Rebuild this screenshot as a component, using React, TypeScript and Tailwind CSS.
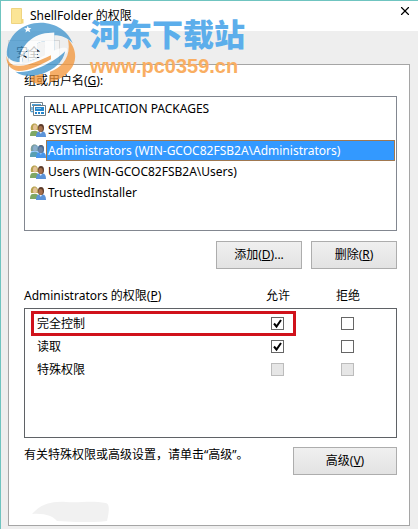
import type { ReactNode } from "react";
import { X } from "lucide-react";

type Principal = {
  name: string;
  kind: "package" | "group";
};

const principals: Principal[] = [
  { name: "ALL APPLICATION PACKAGES", kind: "package" },
  { name: "SYSTEM", kind: "group" },
  { name: "Administrators (WIN-GCOC82FSB2A\\Administrators)", kind: "group" },
  { name: "Users (WIN-GCOC82FSB2A\\Users)", kind: "group" },
  { name: "TrustedInstaller", kind: "group" },
];

const selectedIndex = 2;

const permissions = [
  { id: "full", name: "完全控制", allow: true, disabled: false },
  { id: "read", name: "读取", allow: true, disabled: false },
  { id: "special", name: "特殊权限", allow: false, disabled: true },
];

function PackageIcon() {
  return (
    <svg viewBox="0 0 16 14" className="h-[14px] w-4 shrink-0">
      <path d="M.5 9.500V.5h12V3" fill="#fff" stroke="#73828c" />
      <path d="M2 2h9v2H2z" fill="#4ba3dc" />
      <path d="M1 9.500h3M2 5v3" stroke="#4ba3dc" strokeWidth="1.500" />
      <path d="M3.500 3.500h12v10h-12z" fill="#fff" stroke="#6b7b86" />
      <path d="M5 5h9v4H5z" fill="#2586cd" />
      <path d="M5 11h2M8 11h2M11 11h3" stroke="#2586cd" strokeWidth="2" />
      <path d="M6 6h5v1H6z" fill="#83c4ec" />
    </svg>
  );
}

function GroupIcon({ selected }: { selected: boolean }) {
  return (
    <svg viewBox="0 0 16 14" className="h-[14px] w-4 shrink-0">
      <path d="M0 13c0-3 .6-5 3-5h3c2 0 3 2 3 5z" fill="#7ea764" />
      <path d="M1 7C0 3 2 .4 4.500.4S8.500 3 8 7z" fill="#b6a24e" />
      <ellipse cx="5" cy="4.600" rx="2" ry="3" fill="#e4c298" />
      <path d="M6 14c0-3.500 1-5.500 4-5.500h2.500c2.500 0 3.500 2 3.500 5.500z" fill="#5b93d8" />
      <ellipse cx="11" cy="5" rx="3" ry="4" fill="#5c3a28" />
      <ellipse cx="10.600" cy="6" rx="2.200" ry="3" fill="#a5704c" />
      <path d="M9.500 9l1.300 2L12 9z" fill="#dceaf8" />
      {selected && (
        <path
          d="M0 13c0-3 .6-5 1.500-6C0 3 2 .4 4.500.4c2 0 3 .8 3.800 2C11 0 14 1.500 14 5v3.500c1.500 1 2 3 2 5.500H6v-1z"
          fill="#3399ff"
          opacity=".5"
        />
      )}
    </svg>
  );
}

function FolderIcon() {
  return (
    <svg viewBox="0 0 13 16" className="h-4 w-[13px] shrink-0">
      <path d="M.5.5h10v15H.5z" fill="#fbe596" stroke="#efd480" />
      <path d="M10.500 11h2v4.500h-2z" fill="#f3d778" />
    </svg>
  );
}

function Watermark() {
  return (
    <div className="pointer-events-none absolute left-[5px] top-[13px] flex items-start gap-[14px]">
      <svg viewBox="18 20 210 190" className="mt-2 h-[63px] w-[70px] opacity-75">
        {/* blue dome with the star */}
        <path
          d="M20 120C18 60 68 22 122 22c48 0 84 28 97 62-16-16-34-24-56-24v52l-28 10V78c-10 0-18 3-24 7v44l-26 9V104c-12 8-16 20-18 36-24 2-40-4-47-20z"
          fill="#3a91cc"
        />
        {/* white strokes of the H */}
        <path
          d="M60 150c-8-40 22-86 75-96l28-2v62l-28 10V78c-10 0-18 3-24 7v44l-26 9v-36c-14 10-20 26-18 46z"
          fill="#fff"
        />
        {/* ribbon across the middle */}
        <path
          d="M26 128c14 22 42 22 68 12 34-12 62-36 94-42 14-2 18 4 12 14-20 28-56 46-96 54-40 8-72-4-78-38z"
          fill="#fff"
        />
        <path
          d="M46 170c36 4 66-8 96-24 24-12 42-26 54-38-6 32-34 56-68 68-30 10-60 10-82-6z"
          fill="#3a91cc"
        />
        {/* orange crescents */}
        <path
          d="M19 122c4 22 18 32 40 30 30-2 60-16 94-32v12c-32 18-64 34-98 36-24-2-38-22-36-46z"
          fill="#f39436"
        />
        <path
          d="M204 72c28 28 30 72 2 98-14 16-32 26-56 32v-32c36-12 66-46 54-98zM92 184l36-8v32c-14 0-26-4-36-10z"
          fill="#f39436"
        />
        <path d="M83 31l3 7 8 0-6 5 3 8-8-4-7 5 2-8-6-5h8z" fill="#fff" />
      </svg>
      <div className="flex flex-col">
        <span className="font-['Noto_Sans_CJK_SC',sans-serif] text-[31px] font-black leading-[38px] text-[#5caeeb]">
          河东下载站
        </span>
        <span className="font-['Liberation_Sans_Narrow','Liberation_Sans',sans-serif] text-[20px] font-bold leading-7 text-[#f9ae62]">
          www.pc0359.cn
        </span>
      </div>
    </div>
  );
}

function DialogButton({ children, className }: { children: ReactNode; className: string }) {
  return (
    <button
      type="button"
      className={`h-7 border border-[#adadad] bg-linear-to-b from-[#f0f0f0] to-[#e3e3e3] ${className}`}
    >
      {children}
    </button>
  );
}

function PermissionBox({ label, checked, disabled }: { label: string; checked: boolean; disabled: boolean }) {
  return (
    <span className="grid size-[13px]">
      <input
        type="checkbox"
        aria-label={label}
        defaultChecked={checked}
        disabled={disabled}
        className="peer col-start-1 row-start-1 size-[13px] appearance-none border border-[#666] bg-white disabled:border-[#bcbcbc] disabled:bg-[#e6e6e6]"
      />
      <svg
        viewBox="0 0 13 13"
        className="pointer-events-none col-start-1 row-start-1 hidden size-[13px] peer-checked:block"
      >
        <path d="M3 6.500l2.500 3L10 3" fill="none" stroke="#000" strokeWidth="2" />
      </svg>
    </span>
  );
}

export default function App() {
  return (
    <div className="relative border-l border-t border-[#6fc4c0] bg-[#eee] font-['Noto_Sans','Noto_Sans_CJK_SC',sans-serif] text-xs text-black">
      <header className="flex h-[30px] items-center gap-[6px] bg-white pl-[10px] pr-[6px]">
        <FolderIcon />
        <h1 className="grow">ShellFolder 的权限</h1>
        <button type="button" aria-label="关闭" className="self-start pt-[3px]">
          <X size={14} strokeWidth={2} />
        </button>
      </header>

      <div className="pb-[3px] pl-[7px] pr-2 pt-[9px]">
        <div role="tablist" className="flex">
          <button
            type="button"
            role="tab"
            aria-selected="true"
            className="h-6 w-[52px] border border-b-0 border-[#d5d5d5] bg-[#f3f3f3] pr-3"
          >
            安全
          </button>
        </div>

        <main className="border border-[#a5a5a5] bg-white pb-[3px] pl-[15px] pr-3 pt-2">
          <h2 className="h-[23px] leading-4">
            组或用户名(<u>G</u>):
          </h2>
          <ul role="listbox" aria-label="组或用户名" className="h-[135px] border border-[#828790] py-[1px] pl-[5px] pr-[1px]">
            {principals.map((principal, index) => (
              <li
                key={principal.name}
                role="option"
                aria-selected={index === selectedIndex}
                className="flex h-[21px] items-center"
              >
                {principal.kind === "package" ? (
                  <PackageIcon />
                ) : (
                  <GroupIcon selected={index === selectedIndex} />
                )}
                <span
                  className={
                    index === selectedIndex
                      ? "grow border border-[#a07850] bg-[#3399ff] pl-[1px] leading-[19px] text-white"
                      : "pl-[2px] leading-[21px]"
                  }
                >
                  {principal.name}
                </span>
              </li>
            ))}
          </ul>

          <div className="flex justify-end gap-[9px] pt-[10px]">
            <DialogButton className="w-[86px]">
              添加(<u>D</u>)...
            </DialogButton>
            <DialogButton className="w-[86px]">
              删除(<u>R</u>)
            </DialogButton>
          </div>

          <div className="flex h-[39px] items-end pb-1">
            <h2 className="grow">
              Administrators 的权限(<u>P</u>)
            </h2>
            <span className="w-[70px] text-center">允许</span>
            <span className="mr-[14px] w-[70px] text-center">拒绝</span>
          </div>
          <div className="h-[130px] border border-[#5f6266] pt-[3px]">
            <table className="w-full border-collapse">
              <tbody>
                {permissions.map((permission, index) => (
                  <tr key={permission.id} className="h-[23px]">
                    <th scope="row" className="relative p-0 pl-3 text-left font-normal">
                      {permission.name}
                      {index === 0 && (
                        <span className="pointer-events-none absolute -right-[54px] -top-px left-[6px] h-[25px] border-3 border-[#d0121b]" />
                      )}
                    </th>
                    <td className="w-[70px] p-0">
                      <div className="flex justify-center">
                        <PermissionBox
                          label={`允许${permission.name}`}
                          checked={permission.allow}
                          disabled={permission.disabled}
                        />
                      </div>
                    </td>
                    <td className="w-[84px] p-0 pr-[14px]">
                      <div className="flex justify-center">
                        <PermissionBox
                          label={`拒绝${permission.name}`}
                          checked={false}
                          disabled={permission.disabled}
                        />
                      </div>
                    </td>
                  </tr>
                ))}
              </tbody>
            </table>
          </div>

          <div className="flex items-start justify-between pt-[9px]">
            <p>有关特殊权限或高级设置，请单击“高级”。</p>
            <DialogButton className="w-[104px]">
              高级(<u>V</u>)
            </DialogButton>
          </div>

          {/* erased link under the note */}
          <svg viewBox="0 0 80 21" className="ml-2 mt-[26px] h-[21px] w-20">
            <path
              d="M0 13C8 4 18 0 34 1c16 1 24-2 40 1 3 1 4 5 1 18-18 2-34 1-50 0-4-5-12-8-25-7z"
              fill="#f1f1f1"
            />
          </svg>
        </main>
      </div>

      <Watermark />
    </div>
  );
}
